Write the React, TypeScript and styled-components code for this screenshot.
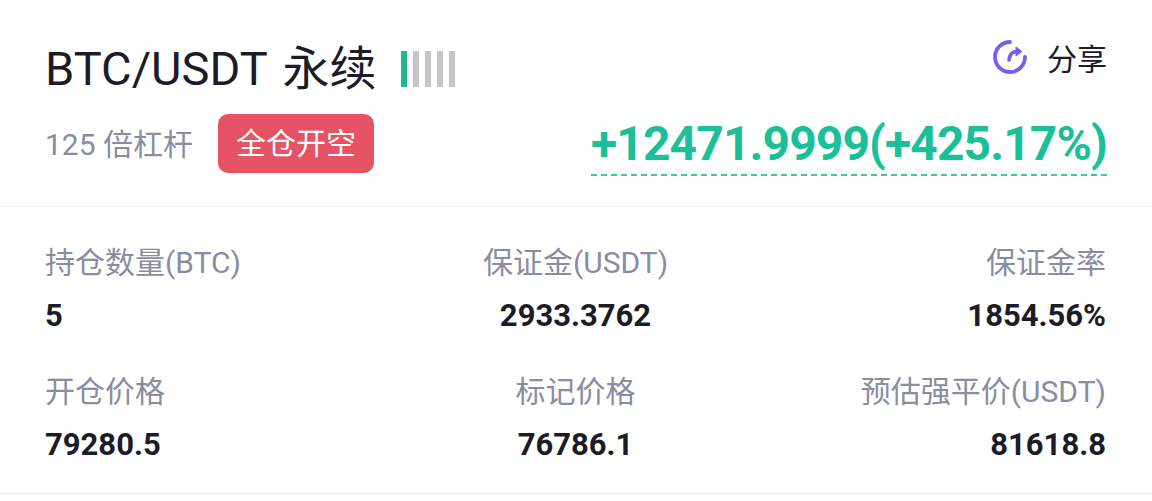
import React from 'react';
import styled, {createGlobalStyle} from 'styled-components';

const CJK = `"Roboto", "Noto Sans CJK SC", sans-serif`;

const GlobalStyle = createGlobalStyle`
  html, body {
    margin: 0;
    padding: 0;
    background: #ffffff;
  }

  body {
    font-family: ${CJK};
    overflow: hidden;
  }
`;

const Page = styled.div`
  width: 1152px;
  height: 501px;
  background: #ffffff;
`;

const Head = styled.header`
  height: 207px;
  padding: 0 45px;
  box-sizing: border-box;
  border-bottom: 1px solid #f0f0f2;
`;

const HeadRow = styled.div`
  display: flex;
  justify-content: space-between;
`;

const TitleBox = styled.div`
  display: flex;
  align-items: center;
  height: 114px;
  padding-top: 24px;
  box-sizing: border-box;
`;

const Title = styled.h1`
  margin: 0;
  font-size: 47px;
  line-height: 54px;
  font-weight: 400;
  word-spacing: 4px;
  color: #1c1c28;
`;

const Bars = styled.div`
  display: flex;
  gap: 6px;
  margin-left: 25px;
`;

const Bar = styled.span<{$on: boolean}>`
  display: block;
  width: 6px;
  height: 36px;
  background: ${({$on}) => ($on ? `#1fb78f` : `#c6c6c6`)};
`;

const Share = styled.div`
  display: flex;
  align-items: center;
  gap: 19px;
  height: 114px;
  font-size: 30px;
  color: #1c1c28;
`;

const SubLeft = styled.div`
  display: flex;
  align-items: flex-start;
  gap: 25px;
`;

const Leverage = styled.span`
  font-size: 30px;
  line-height: 61px;
  color: #8a8ca2;
`;

const Tag = styled.span`
  display: block;
  width: 156px;
  height: 59px;
  line-height: 59px;
  text-align: center;
  font-size: 30px;
  color: #ffffff;
  background: #e55365;
  border-radius: 10px;
`;

const Profit = styled.span`
  font-family: "Roboto", sans-serif;
  font-weight: 700;
  font-size: 48px;
  line-height: 60px;
  letter-spacing: -0.9px;
  color: #1bbf98;
  border-bottom: 2px dashed #3cc7a8;
`;

const Stats = styled.section`
  display: grid;
  grid-template-columns: repeat(3, 1fr);
  align-content: start;
  row-gap: 32px;
  height: 287px;
  padding: 35px 46px 0 45px;
  box-sizing: border-box;
  border-bottom: 1px solid #ececee;
`;

const Stat = styled.div<{$align: string}>`
  text-align: ${({$align}) => $align};
`;

const Label = styled.div`
  font-size: 30px;
  line-height: 42px;
  color: #8a8ca2;
`;

const Value = styled.div`
  font-family: "Roboto", sans-serif;
  font-weight: 700;
  font-size: 31px;
  line-height: 46px;
  margin-top: 9px;
  color: #1c1c28;
`;

const ShareIcon: React.FunctionComponent = () => (
  <svg width="36" height="36" viewBox="0 0 36 36" fill="none">
    <path d="M18 3 A15 15 0 1 0 33 18" stroke="#7a5cf0" strokeWidth="3.8" strokeLinecap="round" />
    <path d="M17 21 C17.5 16 20 13 24 12.5" stroke="#7a5cf0" strokeWidth="3.6" strokeLinecap="round" />
    <path d="M24 8 L30 12.5 L24 17 Z" fill="#7a5cf0" stroke="#7a5cf0" strokeWidth="1" strokeLinejoin="round" />
  </svg>
);

const stats = [
  {label: `持仓数量(BTC)`, value: `5`, align: `left`},
  {label: `保证金(USDT)`, value: `2933.3762`, align: `center`},
  {label: `保证金率`, value: `1854.56%`, align: `right`},
  {label: `开仓价格`, value: `79280.5`, align: `left`},
  {label: `标记价格`, value: `76786.1`, align: `center`},
  {label: `预估强平价(USDT)`, value: `81618.8`, align: `right`},
];

const App: React.FunctionComponent = () => (
  <Page>
    <GlobalStyle />
    <Head>
      <HeadRow>
        <TitleBox>
          <Title>BTC/USDT 永续</Title>
          <Bars>
            {[0, 1, 2, 3, 4].map((i) => <Bar key={i} $on={i === 0} />)}
          </Bars>
        </TitleBox>
        <Share>
          <ShareIcon />
          <span>分享</span>
        </Share>
      </HeadRow>
      <HeadRow>
        <SubLeft>
          <Leverage>125 倍杠杆</Leverage>
          <Tag>全仓开空</Tag>
        </SubLeft>
        <Profit>+12471.9999(+425.17%)</Profit>
      </HeadRow>
    </Head>
    <Stats>
      {stats.map((stat) => (
        <Stat key={stat.label} $align={stat.align}>
          <Label>{stat.label}</Label>
          <Value>{stat.value}</Value>
        </Stat>
      ))}
    </Stats>
  </Page>
);

export default App;
